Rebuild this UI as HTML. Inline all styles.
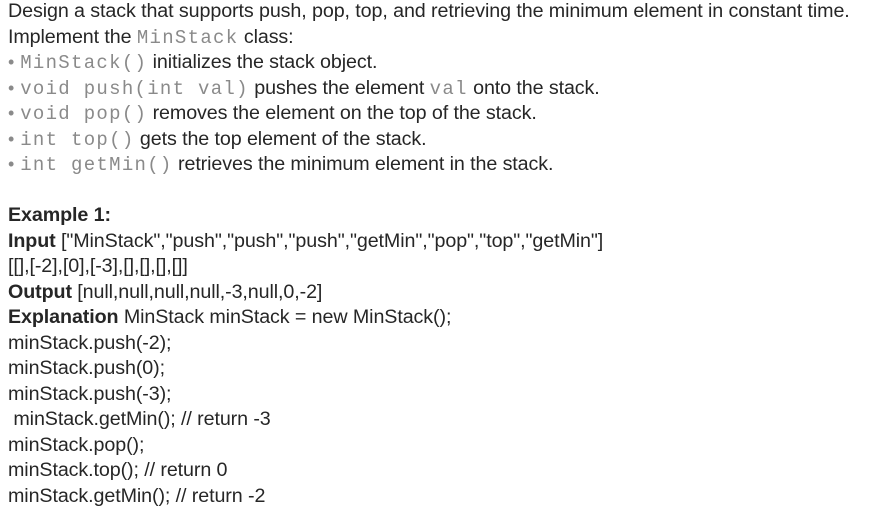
<!DOCTYPE html>
<html><head><style>
body{margin:0;background:#fff;width:883px;height:512px;overflow:hidden;}
.w{padding:0 0 0 8px;font-family:"Liberation Sans",sans-serif;font-size:19.7px;color:#262626;letter-spacing:-0.1px;}
.l{height:25.5px;line-height:25.5px;white-space:pre;}
.c{font-family:"Liberation Mono",monospace;color:#8a8a8a;font-size:19px;letter-spacing:1.3px;}
.b{color:#8a8a8a;font-size:18px;margin-right:6px}
.w>.l:first-child{margin-top:-1px}
</style></head><body><div class="w">
<div class="l">Design a stack that supports push, pop, top, and retrieving the minimum element in constant time.</div>
<div class="l">Implement the <span class="c">MinStack</span> class:</div>
<div class="l"><span class="b">•</span><span class="c">MinStack()</span> initializes the stack object.</div>
<div class="l"><span class="b">•</span><span class="c">void push(int val)</span> pushes the element <span class="c">val</span> onto the stack.</div>
<div class="l"><span class="b">•</span><span class="c">void pop()</span> removes the element on the top of the stack.</div>
<div class="l"><span class="b">•</span><span class="c">int top()</span> gets the top element of the stack.</div>
<div class="l"><span class="b">•</span><span class="c">int getMin()</span> retrieves the minimum element in the stack.</div>
<div class="l"> </div>
<div class="l"><b>Example 1:</b></div>
<div class="l"><b>Input</b> ["MinStack","push","push","push","getMin","pop","top","getMin"]</div>
<div class="l">[[],[-2],[0],[-3],[],[],[],[]]</div>
<div class="l"><b>Output</b> [null,null,null,null,-3,null,0,-2]</div>
<div class="l"><b>Explanation</b> MinStack minStack = new MinStack();</div>
<div class="l">minStack.push(-2);</div>
<div class="l">minStack.push(0);</div>
<div class="l">minStack.push(-3);</div>
<div class="l"> minStack.getMin(); // return -3</div>
<div class="l">minStack.pop();</div>
<div class="l">minStack.top(); // return 0</div>
<div class="l">minStack.getMin(); // return -2</div>
</div></body></html>
